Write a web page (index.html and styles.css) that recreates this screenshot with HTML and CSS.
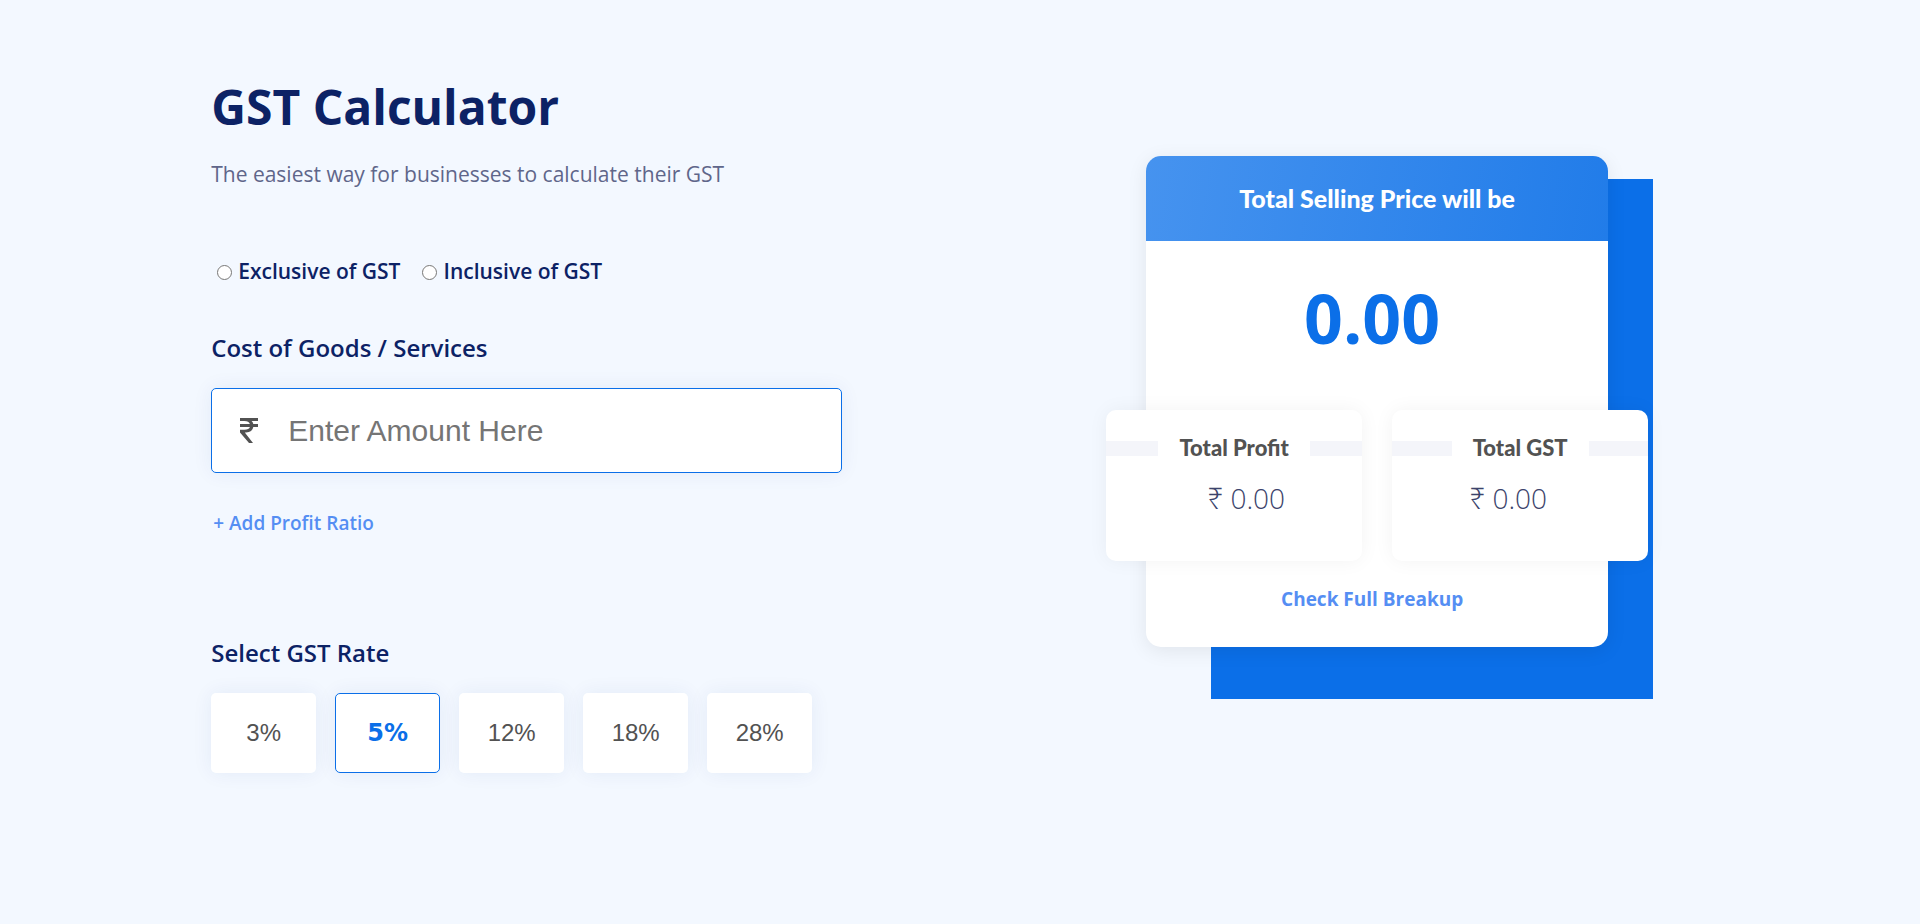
FILE: index.html
```html
<!DOCTYPE html>
<html lang="en">
<head>
<meta charset="utf-8">
<meta name="viewport" content="width=device-width, initial-scale=1">
<title>GST Calculator</title>
<link rel="stylesheet" href="styles.css">
</head>
<body>
<main class="page">
  <form class="calculator">
    <h1 class="title">GST Calculator</h1>
    <p class="subtitle">The easiest way for businesses to calculate their GST</p>

    <div class="modes" role="radiogroup" aria-label="GST mode">
      <label class="mode"><input class="mode-radio" type="radio" name="mode" value="exclusive">Exclusive of GST</label>
      <label class="mode"><input class="mode-radio" type="radio" name="mode" value="inclusive">Inclusive of GST</label>
    </div>

    <label class="field-label" for="amount">Cost of Goods / Services</label>
    <div class="amount-box">
      <svg class="rupee" viewBox="0 0 18 25" aria-hidden="true">
        <path d="M0 0H18V3H11.600Q12.900 4.200 13.300 6H18V9H13.300Q12.400 14.200 6 14.500H4.800L13 25H9L0 14.600V11.800H4.500Q9 11.800 9.900 9H0V6H9.900Q8.900 3 4.500 3H0Z"/>
      </svg>
      <input class="amount-input" id="amount" type="text" inputmode="decimal" placeholder="Enter Amount Here">
    </div>
    <a class="link profit-link" href="#profit">+ Add Profit Ratio</a>

    <h2 class="field-label" id="rate-label">Select GST Rate</h2>
    <div class="rates" role="group" aria-labelledby="rate-label">
      <button class="rate" type="button">3%</button>
      <button class="rate rate-active" type="button" aria-pressed="true">5%</button>
      <button class="rate" type="button">12%</button>
      <button class="rate" type="button">18%</button>
      <button class="rate" type="button">28%</button>
    </div>
  </form>

  <section class="result">
    <div class="backdrop"></div>
    <div class="card">
      <h2 class="card-head">Total Selling Price will be</h2>
      <p class="total">0.00</p>
      <div class="tiles">
        <div class="tile tile-profit">
          <h3 class="tile-title">Total Profit</h3>
          <p class="tile-value">₹ 0.00</p>
        </div>
        <div class="tile tile-gst">
          <h3 class="tile-title">Total GST</h3>
          <p class="tile-value">₹ 0.00</p>
        </div>
      </div>
      <a class="link breakup-link" href="#breakup">Check Full Breakup</a>
    </div>
  </section>
</main>
</body>
</html>
```
FILE: styles.css
```css
* {
  box-sizing: border-box;
}

body {
  margin: 0;
  background: #f3f8ff;
  color: #0c2265;
  font-family: "Open Sans", "Noto Sans", sans-serif;
}

h1, h2, h3, p {
  margin: 0;
}

.page {
  display: flex;
  align-items: flex-start;
  justify-content: space-between;
  gap: 48px;
  padding: 72px 13.9% 72px 11%;
}

.calculator {
  display: flex;
  flex-direction: column;
  flex: 0 1 631px;
}

.title {
  font-size: 48px;
  line-height: 70px;
  font-weight: 700;
}

.subtitle {
  margin-top: 16px;
  color: #5f668a;
  font-size: 21px;
  line-height: 32px;
  font-weight: 400;
}

.modes {
  display: flex;
  gap: 22px;
  margin-top: 65px;
  padding-left: 6px;
}

.mode {
  display: flex;
  align-items: center;
  gap: 6px;
  font-size: 21px;
  line-height: 32px;
  font-weight: 600;
}

.mode-radio {
  width: 15px;
  height: 15px;
  margin: 2px 0 0;
}

.field-label {
  font-size: 24px;
  line-height: 32px;
  font-weight: 600;
}

.modes + .field-label {
  margin-top: 45px;
}

.amount-box {
  display: flex;
  align-items: center;
  gap: 30px;
  height: 85px;
  margin-top: 24px;
  padding: 0 28px;
  border: 1px solid #0b6fe8;
  border-radius: 5px;
  background: #fff;
  box-shadow: 0 0 20px rgba(30, 60, 140, 0.07);
}

.rupee {
  flex: none;
  width: 18px;
  height: 25px;
  fill: #525252;
}

.amount-input {
  flex: 1;
  min-width: 0;
  padding: 0;
  border: 0;
  outline: 0;
  background: none;
  color: #525252;
  font-family: "Liberation Sans", Arial, sans-serif;
  font-size: 30px;
}

.amount-input::placeholder {
  color: #757575;
}

.link {
  color: #558ef3;
  font-size: 19px;
  line-height: 28px;
  text-decoration: none;
}

.profit-link {
  align-self: flex-start;
  margin: 36px 0 100px 2px;
  font-weight: 600;
}

.rates {
  display: flex;
  gap: 19px;
  margin-top: 24px;
}

.rate {
  flex: 0 1 105px;
  height: 80px;
  padding: 0;
  border: 0;
  border-radius: 5px;
  background: #fff;
  box-shadow: 0 0 20px rgba(30, 60, 140, 0.07);
  color: #525252;
  font-family: "Liberation Sans", Arial, sans-serif;
  font-size: 24px;
}

.rate-active {
  border: 1px solid #0b6fe8;
  color: #0b6fe8;
  font-family: "DejaVu Sans", sans-serif;
  font-weight: 700;
}

.result {
  position: relative;
  flex: 0 0 547px;
  margin-top: 84px;
  padding: 0 45px 52px 40px;
}

.backdrop {
  position: absolute;
  inset: 23px 0 0 105px;
  background: #0b6fe8;
}

.card {
  position: relative;
  display: flex;
  flex-direction: column;
  padding-bottom: 34px;
  border-radius: 15px;
  background: #fff;
  box-shadow: 0 4px 20px rgba(0, 0, 0, 0.08);
}

.card-head {
  padding: 26px 0 27px;
  border-radius: 15px 15px 0 0;
  background: linear-gradient(100deg, #4693ef, #217ce9);
  color: #fff;
  font-family: Lato, sans-serif;
  font-size: 25px;
  line-height: 32px;
  font-weight: 900;
  text-align: center;
}

.total {
  margin: 32px 10px 47px 0;
  color: #0b6fe8;
  font-size: 68px;
  line-height: 90px;
  font-weight: 700;
  text-align: center;
}

.tiles {
  display: flex;
  gap: 30px;
  margin: 0 -40px;
}

.tile {
  flex: 1;
  padding: 22px 0 49px;
  border-radius: 10px;
  background: #fff;
  box-shadow: 0 0 20px rgba(0, 0, 0, 0.05);
}

.tile-title {
  display: flex;
  align-items: center;
  gap: 21px;
  color: #525252;
  font-family: Lato, sans-serif;
  font-size: 22px;
  line-height: 32px;
  font-weight: 900;
}

.tile-title::before,
.tile-title::after {
  content: "";
  flex: 1;
  height: 15px;
  background: #f4f5fa;
}

.tile-value {
  margin-top: 20px;
  color: #3c446c;
  font-size: 28px;
  line-height: 28px;
  font-weight: 300;
  text-align: center;
}

.tile-profit .tile-value {
  padding-left: 24px;
}

.tile-gst .tile-value {
  padding-right: 24px;
}

.breakup-link {
  margin: 24px 10px 0 0;
  font-weight: 700;
  text-align: center;
}
```
